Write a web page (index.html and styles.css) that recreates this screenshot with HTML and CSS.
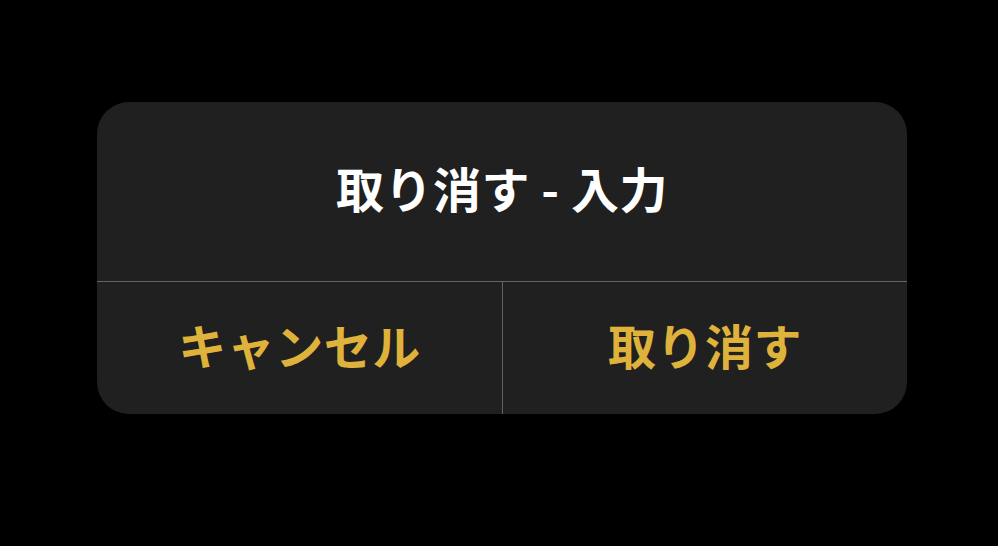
FILE: index.html
```html
<!DOCTYPE html>
<html lang="ja">
<head>
<meta charset="utf-8">
<link rel="stylesheet" href="styles.css">
</head>
<body>
<div class="dialog">
  <div class="title">取り消す - 入力</div>
  <div class="actions">
    <div class="btn">キャンセル</div>
    <div class="btn">取り消す</div>
  </div>
</div>
</body>
</html>
```
FILE: styles.css
```css
html, body {
  margin: 0;
  padding: 0;
  background: #000;
  width: 998px;
  height: 546px;
  overflow: hidden;
}
body {
  font-family: "Noto Sans CJK JP", "Noto Sans", sans-serif;
}
.dialog {
  margin: 102px 0 0 97px;
  width: 810px;
  height: 312px;
  background: #202020;
  border-radius: 32px;
  overflow: hidden;
  display: flex;
  flex-direction: column;
}
.title {
  height: 180px;
  box-sizing: border-box;
  padding-bottom: 10px;
  display: flex;
  align-items: center;
  justify-content: center;
  color: #fff;
  font-weight: 700;
  font-size: 48px;
  letter-spacing: 0.5px;
  border-bottom: 1px solid #636363;
  line-height: 1;
}
.actions {
  flex: 1;
  display: grid;
  grid-template-columns: 405px 1fr;
}
.btn {
  display: flex;
  align-items: center;
  justify-content: center;
  padding-bottom: 8px;
  color: #dfb23b;
  font-weight: 700;
  font-size: 48px;
  letter-spacing: 0.5px;
  line-height: 1;
}
.btn + .btn {
  border-left: 1px solid #636363;
}
```
